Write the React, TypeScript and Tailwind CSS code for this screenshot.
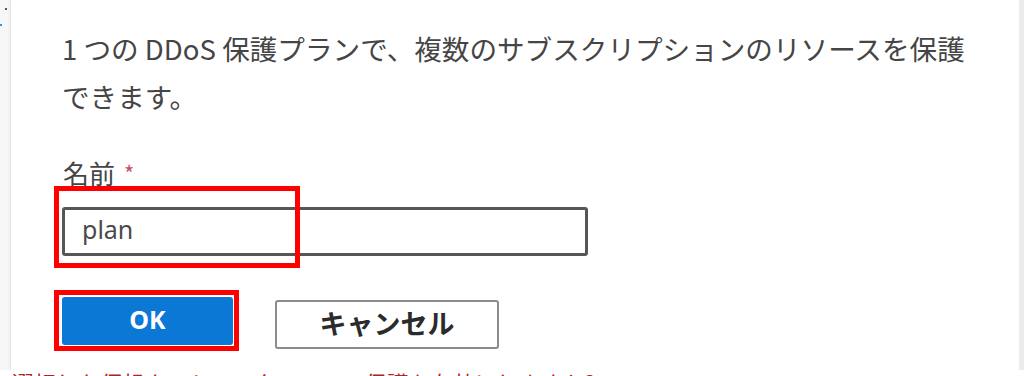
import React from 'react';

const jp = { fontFamily: '"Noto Sans CJK JP", "Noto Sans", sans-serif' };
const latin = { fontFamily: '"Segoe UI", "Noto Sans", "Noto Sans CJK JP", sans-serif' };

export default function App() {
    return (
        <div className="w-[1024px] h-[376px] overflow-hidden bg-[#f3f3f3] flex flex-col" style={jp}>
            <div className="flex h-[370px] shrink-0">
                {/* left edge of the page behind the dialog */}
                <div className="w-[10px] shrink-0 bg-[#f7f7f7] flex flex-col pt-[8px]">
                    <div className="ml-[5px] w-[2px] h-[2px] bg-[#555]" />
                    <div className="mt-[14px] w-[2px] h-[2px] bg-[#3a8ee6]" />
                </div>

                <div className="w-[1009px] shrink-0 bg-white border-l border-[#e6e6e6] shadow-[1px_1px_3px_rgba(0,0,0,0.18)] pl-[51px] pt-[24px]">
                    <p className="w-[940px] text-[27.6px] leading-[48px] text-[#454545]">
                        1 つの DDoS 保護プランで、複数のサブスクリプションのリソースを保護
                        <br />
                        できます。
                    </p>

                    <div className="mt-[37px] text-[26px] leading-[32px] text-[#454545] flex items-start">
                        <span className="ml-[1px]">名前</span>
                        <span className="ml-[9px] mt-[2px] text-[22px] leading-[26px] text-[#c4515f]">*</span>
                    </div>

                    <div className="relative mt-[18px] w-[526px]">
                        <div className="h-[49px] border-[3px] border-[#565656] rounded-[3px] bg-white flex items-center pl-[17px]">
                            <span className="text-[25px] text-[#4a4a4a] leading-none pb-[4px]" style={latin}>plan</span>
                        </div>
                        {/* annotation */}
                        <div className="absolute left-[-8px] top-[-21px] w-[246px] h-[82px] border-[5px] border-[#ff0000]" />
                    </div>

                    <div className="mt-[41px] flex items-start">
                        <div className="relative">
                            <button className="w-[171px] h-[48px] rounded-[3px] bg-[#0a78d4] text-white text-[25px] font-bold flex items-center justify-center pb-[2px]" style={latin}>
                                OK
                            </button>
                            <div className="absolute left-[-8px] top-[-7px] w-[185px] h-[61px] border-[5px] border-[#ff0000]" />
                        </div>
                        <button className="ml-[42px] mt-[3px] w-[224px] h-[49px] rounded-[3px] border-2 border-[#8c8c8c] bg-white text-[27px] font-bold text-[#2b2b2b] flex items-center justify-center pb-[2px]">
                            キャンセル
                        </button>
                    </div>
                </div>

                <div className="flex-1 bg-[#ececec]" />
            </div>

            <div className="h-[6px] shrink-0 overflow-hidden pl-[12px] bg-white">
                <p className="text-[22px] leading-[22px] mt-[1px] whitespace-nowrap text-[#a4262c]">
                    選択した仮想ネットワークで DDoS 保護を有効にしますか?
                </p>
            </div>
        </div>
    );
}
